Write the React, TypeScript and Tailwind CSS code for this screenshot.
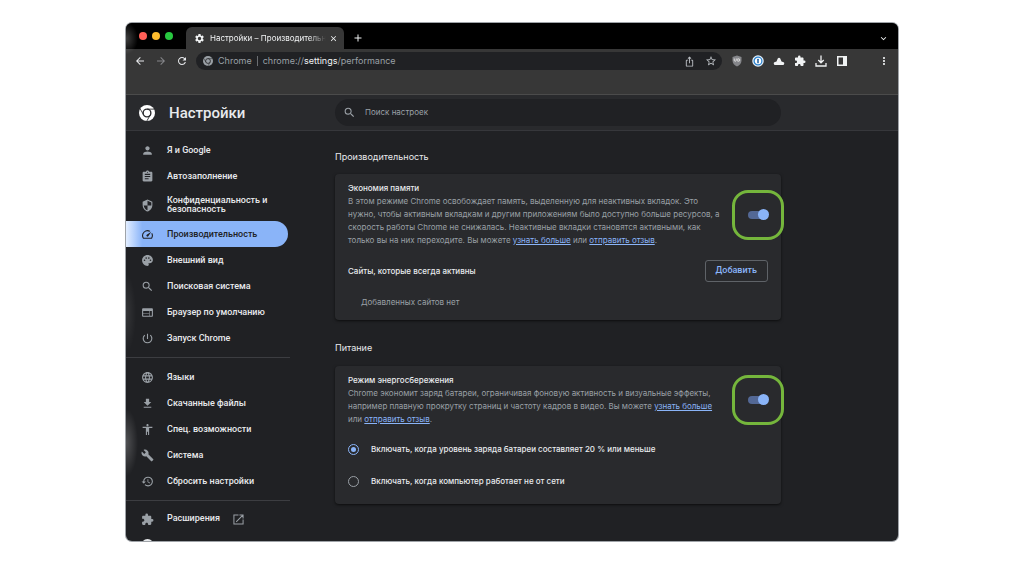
import React, { useId, useState } from "react";
import type { IconType } from "react-icons";
import {
  MdAccessibility,
  MdAdd,
  MdArrowBack,
  MdArrowForward,
  MdAssignment,
  MdBuild,
  MdClose,
  MdDownload,
  MdExpandMore,
  MdExtension,
  MdHistory,
  MdIosShare,
  MdLanguage,
  MdMoreVert,
  MdPalette,
  MdPerson,
  MdPowerSettingsNew,
  MdRefresh,
  MdSearch,
  MdSecurity,
  MdSettings,
  MdSpeed,
  MdStarBorder,
  MdWeb,
} from "react-icons/md";

function ChromeLogo({ className }: { className?: string }) {
  return (
    <svg viewBox="0 0 24 24" className={className} aria-hidden="true">
      <circle cx="12" cy="12" r="12" fill="currentColor" />
      <g fill="none" stroke="#292a2d">
        <circle cx="12" cy="12" r="5.8" strokeWidth="2.1" />
        <path strokeWidth="1.3" d="M12 6.2H23M7 14.9 1.4 5.2M17 14.9 11.4 24.6" />
      </g>
    </svg>
  );
}

function LaunchIcon({ className }: { className?: string }) {
  return (
    <svg viewBox="0 0 24 24" className={className} fill="none" stroke="currentColor" strokeWidth="2.2" aria-hidden="true">
      <path d="M12 2H2v20h20V12M14 2h8v8M22 2 7 17" />
    </svg>
  );
}

function ShieldBadge() {
  return (
    <svg viewBox="0 0 24 24" className="size-3" aria-hidden="true">
      <path d="M12 1 21 4v7c0 6-4 10-9 12C7 21 3 17 3 11V4z" fill="#85868a" />
      <path d="M6.500 7v3.500a2 2 0 0 0 4 0V7M13.500 7.500v5h1.500a2.500 2.500 0 0 0 0-5z" fill="none" stroke="#e4e4e4" strokeWidth="1.800" />
    </svg>
  );
}

function KeyholeBadge() {
  return (
    <svg viewBox="0 0 24 24" className="size-3" aria-hidden="true">
      <circle cx="12" cy="12" r="11.500" fill="#e8f3fc" />
      <circle cx="12" cy="12" r="7.800" fill="#fff" stroke="#2c83cf" strokeWidth="2.600" />
      <rect x="10.500" y="7.500" width="3" height="9" rx="1" fill="#1c5f9f" />
    </svg>
  );
}

function CloudDrive() {
  return (
    <svg viewBox="0 0 24 24" className="size-3" fill="#f1f3f4" aria-hidden="true">
      <path d="M5 20a3 3 0 0 1-1-6l3-1 2.500-6q2.500-3 5 0l2.500 6 3 1a3 3 0 0 1-1 6z" />
    </svg>
  );
}

function TrayDownload() {
  return (
    <svg viewBox="0 0 24 24" className="size-3" fill="none" stroke="#f1f3f4" strokeWidth="2.600" aria-hidden="true">
      <path d="M12 1v14M6.500 10l5.500 5.500 5.500-5.500M2 16v6h20v-6" />
    </svg>
  );
}

function SidePanel() {
  return (
    <svg viewBox="0 0 24 24" className="size-3" aria-hidden="true">
      <path d="M2 2h20v20H2zM5 5v14h9V5z" fill="#f1f3f4" fillRule="evenodd" />
    </svg>
  );
}

type Entry = { label: string; icon: IconType; tall?: boolean; active?: boolean; mirrored?: boolean };

const primary: Entry[] = [
  { label: "Я и Google", icon: MdPerson },
  { label: "Автозаполнение", icon: MdAssignment },
  { label: "Конфиденциальность и безопасность", icon: MdSecurity, tall: true, mirrored: true },
  { label: "Производительность", icon: MdSpeed, active: true },
  { label: "Внешний вид", icon: MdPalette },
  { label: "Поисковая система", icon: MdSearch },
  { label: "Браузер по умолчанию", icon: MdWeb },
  { label: "Запуск Chrome", icon: MdPowerSettingsNew },
];

const advanced: Entry[] = [
  { label: "Языки", icon: MdLanguage },
  { label: "Скачанные файлы", icon: MdDownload },
  { label: "Спец. возможности", icon: MdAccessibility },
  { label: "Система", icon: MdBuild },
  { label: "Сбросить настройки", icon: MdHistory },
];

function NavItem({ label, icon: Icon, tall, active, mirrored }: Entry) {
  const height = tall ? "h-8" : "h-[26px]";
  const tone = active
    ? "rounded-r-full bg-linear-to-r from-[#e3eeff] to-[#8ab4f8] to-10% text-[#202124]"
    : "text-[#e8eaed]";
  return (
    <a
      href="#"
      aria-current={active ? "page" : undefined}
      className={`${height} ${tone} mr-[47px] flex items-center gap-[13px] pl-[15px] text-[9px] leading-[9px] font-medium`}
    >
      <Icon
        className={`size-[13px] shrink-0 ${active ? "text-[#202124]" : "text-[#9aa0a6]"} ${mirrored ? "-scale-x-100" : ""}`}
      />
      <span>{label}</span>
    </a>
  );
}

function Switch({ label }: { label: string }) {
  const [on, setOn] = useState(true);
  return (
    <div className="relative flex w-5 shrink-0 items-center self-center">
      <input
        type="checkbox"
        role="switch"
        aria-label={label}
        checked={on}
        onChange={() => setOn(!on)}
        className="relative h-2 w-5 appearance-none rounded-full bg-[#5f6368] before:absolute before:-top-[2px] before:left-0 before:size-[11px] before:rounded-full before:bg-[#dadce0] checked:bg-[#536895] checked:before:left-[10px] checked:before:bg-[#8ab4f8]"
      />
      <span className="pointer-events-none absolute top-1/2 left-1/2 h-[50px] w-[52px] -translate-1/2 rounded-2xl border-3 border-[#75b63c]" />
    </div>
  );
}

function Link({ children }: { children: React.ReactNode }) {
  return (
    <a href="#" className="text-[#8ab4f8] underline">
      {children}
    </a>
  );
}

function SettingRow({ title, children }: { title: string; children: React.ReactNode }) {
  return (
    <div className="flex gap-6">
      <div className="min-w-0 flex-1">
        <h3 className="text-[8px] leading-[13px] font-medium text-[#e8eaed]">{title}</h3>
        <p className="text-[8px] leading-[13px] text-[#9aa0a6]">{children}</p>
      </div>
      <Switch label={title} />
    </div>
  );
}

function Radio({ label, checked, onSelect }: { label: string; checked: boolean; onSelect: () => void }) {
  const id = useId();
  return (
    <div className="flex h-8 items-center gap-3">
      <input
        id={id}
        type="radio"
        name="battery"
        checked={checked}
        onChange={onSelect}
        className="grid size-[11px] appearance-none place-content-center rounded-full border border-[#9aa0a6] before:size-[5px] before:rounded-full checked:border-[#8ab4f8] checked:before:bg-[#8ab4f8]"
      />
      <label htmlFor={id} className="text-[8px] leading-[13px] font-medium text-[#e8eaed]">
        {label}
      </label>
    </div>
  );
}

function BrowserChrome() {
  return (
    <>
      <div className="flex h-[26px] shrink-0 items-end bg-black text-[#f1f3f4]">
        <div className="flex gap-[5px] self-center pr-[13px] pl-[13px]">
          <span className="size-2 rounded-full bg-[#ff5f57]" />
          <span className="size-2 rounded-full bg-[#febc2e]" />
          <span className="size-2 rounded-full bg-[#28c840]" />
        </div>
        <div className="flex h-[22px] w-[158px] items-center rounded-t-md bg-[#373737] pr-[6px] pl-2">
          <MdSettings className="size-[11px] shrink-0" />
          <span className="ml-[5px] flex-1 overflow-hidden mask-r-from-85% font-['Inter',sans-serif] text-[8px] leading-3 whitespace-nowrap">
            Настройки – Производительность
          </span>
          <button aria-label="Закрыть вкладку" className="ml-[3px]">
            <MdClose className="size-[9px]" />
          </button>
        </div>
        <button aria-label="Новая вкладка" className="mb-[5px] ml-2">
          <MdAdd className="size-3" />
        </button>
        <button aria-label="Поиск вкладок" className="mr-[9px] mb-[5px] ml-auto">
          <MdExpandMore className="size-[11px]" />
        </button>
      </div>
      <div className="flex h-[46px] shrink-0 items-start border-b border-[#4b4b4b] bg-[#373737] px-2 pt-[3px]">
        <div className="flex h-[18px] items-center gap-[9px] text-[#e8eaed]">
          <button aria-label="Назад"><MdArrowBack className="size-3" /></button>
          <button aria-label="Вперёд"><MdArrowForward className="size-3 text-[#85868a]" /></button>
          <button aria-label="Обновить"><MdRefresh className="size-3" /></button>
        </div>
        <div className="ml-2 flex h-[18px] flex-1 items-center rounded-full bg-[#202124] pr-[5px] pl-[7px] font-['Inter',sans-serif] text-[9px] text-[#9aa0a6]">
          <ChromeLogo className="size-[10px]" />
          <span className="ml-[5px]">Chrome</span>
          <span className="mx-[5px] h-[10px] w-px bg-[#6b6e72]" />
          <span className="flex-1">
            chrome://<span className="text-[#f1f3f4]">settings</span>/performance
          </span>
          <button aria-label="Поделиться"><MdIosShare className="size-[11px] text-[#bdc1c6]" /></button>
          <button aria-label="В закладки" className="ml-[10px]"><MdStarBorder className="size-3 text-[#bdc1c6]" /></button>
        </div>
        <div className="ml-[9px] flex h-[18px] items-center gap-[9px] text-[#f1f3f4]">
          <button aria-label="uBlock"><ShieldBadge /></button>
          <button aria-label="1Password"><KeyholeBadge /></button>
          <button aria-label="Облако"><CloudDrive /></button>
          <button aria-label="Расширения"><MdExtension className="size-3" /></button>
          <button aria-label="Загрузки"><TrayDownload /></button>
          <button aria-label="Боковая панель"><SidePanel /></button>
        </div>
        <button aria-label="Меню" className="ml-[30px] flex h-[18px] items-center text-[#f1f3f4]">
          <MdMoreVert className="size-3" />
        </button>
      </div>
    </>
  );
}

export default function App() {
  const [mode, setMode] = useState(0);
  return (
    <div className="flex h-screen flex-col bg-white px-[126px] pt-[23px] pb-[35px] font-['Roboto',sans-serif]">
      <div className="relative flex min-h-0 flex-1 flex-col overflow-hidden rounded-md bg-[#202124] shadow-[0_0_0_1px_#9fa3a8]">
        <BrowserChrome />
        <header className="flex h-[36px] shrink-0 items-center border-b border-[#36373b] bg-[#292a2d]">
          <div className="flex w-[209px] shrink-0 items-center gap-[14px] pl-[13px]">
            <ChromeLogo className="size-4 text-white" />
            <h1 className="text-[15px] leading-5 font-medium text-[#e8eaed]">Настройки</h1>
          </div>
          <div className="flex h-[27px] max-w-[446px] flex-1 items-center gap-[9px] rounded-full bg-[#202124] px-2">
            <MdSearch className="size-[13px] text-[#9aa0a6]" />
            <input
              type="search"
              aria-label="Поиск настроек"
              placeholder="Поиск настроек"
              className="flex-1 bg-transparent font-['Inter',sans-serif] text-[8px] leading-[13px] text-[#e8eaed] outline-none placeholder:text-[#9aa0a6]"
            />
          </div>
        </header>
        <div className="flex min-h-0 flex-1">
          <nav className="w-[209px] shrink-0 overflow-hidden pt-[6px]">
            {primary.map((e) => <NavItem key={e.label} {...e} />)}
            <hr className="mt-[6px] mr-[45px] mb-[6px] border-[#3c3d41]" />
            {advanced.map((e) => <NavItem key={e.label} {...e} />)}
            <hr className="mt-[6px] mr-[45px] mb-[5px] border-[#3c3d41]" />
            <a href="#" className="flex h-[26px] items-center gap-[13px] pl-[15px] text-[9px] font-medium text-[#e8eaed]">
              <MdExtension className="size-[13px] text-[#9aa0a6]" />
              <span>Расширения</span>
              <LaunchIcon className="size-[11px] text-[#9aa0a6]" />
            </a>
            <a href="#" aria-label="О браузере Chrome" className="flex h-[26px] items-center pl-[15px] text-[#e8eaed]">
              <ChromeLogo className="size-[13px]" />
            </a>
          </nav>
          <main className="max-w-[446px] min-w-0 flex-1 font-['Inter',sans-serif]">
            <section>
              <h2 className="pt-[18px] pb-[10px] text-[9px] leading-[15px] text-[#e8eaed]">Производительность</h2>
              <div className="rounded bg-[#292a2d] px-[13px] pt-2 pb-[11px] shadow-sm shadow-black/50">
                <SettingRow title="Экономия памяти">
                  В этом режиме Chrome освобождает память, выделенную для неактивных вкладок. Это нужно, чтобы активным
                  вкладкам и другим приложениям было доступно больше ресурсов, а скорость работы Chrome не снижалась.
                  Неактивные вкладки становятся активными, как только вы на них переходите. Вы можете{" "}
                  <Link>узнать больше</Link> или <Link>отправить отзыв</Link>.
                </SettingRow>
                <div className="mt-[13px] flex items-center justify-between">
                  <h3 className="text-[8px] leading-[13px] font-medium text-[#e8eaed]">Сайты, которые всегда активны</h3>
                  <button className="h-[22px] rounded-[3px] border border-[#5f6368] px-[10px] font-['Roboto',sans-serif] text-[9px] font-medium text-[#8ab4f8]">
                    Добавить
                  </button>
                </div>
                <p className="mt-[14px] pl-[13px] text-[8px] leading-[13px] text-[#9aa0a6]">Добавленных сайтов нет</p>
              </div>
            </section>
            <section>
              <h2 className="pt-5 pb-[11px] text-[9px] leading-[15px] text-[#e8eaed]">Питание</h2>
              <div className="rounded bg-[#292a2d] px-[13px] pt-2 pb-[7px] shadow-sm shadow-black/50">
                <SettingRow title="Режим энергосбережения">
                  Chrome экономит заряд батареи, ограничивая фоновую активность и визуальные эффекты, например плавную
                  прокрутку страниц и частоту кадров в видео. Вы можете <Link>узнать больше</Link> или{" "}
                  <Link>отправить отзыв</Link>.
                </SettingRow>
                <fieldset className="mt-[7px]" aria-label="Режим энергосбережения">
                  <Radio
                    label="Включать, когда уровень заряда батареи составляет 20 % или меньше"
                    checked={mode === 0}
                    onSelect={() => setMode(0)}
                  />
                  <Radio
                    label="Включать, когда компьютер работает не от сети"
                    checked={mode === 1}
                    onSelect={() => setMode(1)}
                  />
                </fieldset>
              </div>
            </section>
          </main>
        </div>
        <div className="pointer-events-none absolute inset-y-0 left-0 w-3 bg-[radial-gradient(ellipse_12px_16px_at_0_3%,#ffffff40,transparent),radial-gradient(ellipse_10px_40px_at_0_56%,#ffffff18,transparent),radial-gradient(ellipse_12px_34px_at_0_81%,#ffffff38,transparent)]" />
      </div>
    </div>
  );
}
